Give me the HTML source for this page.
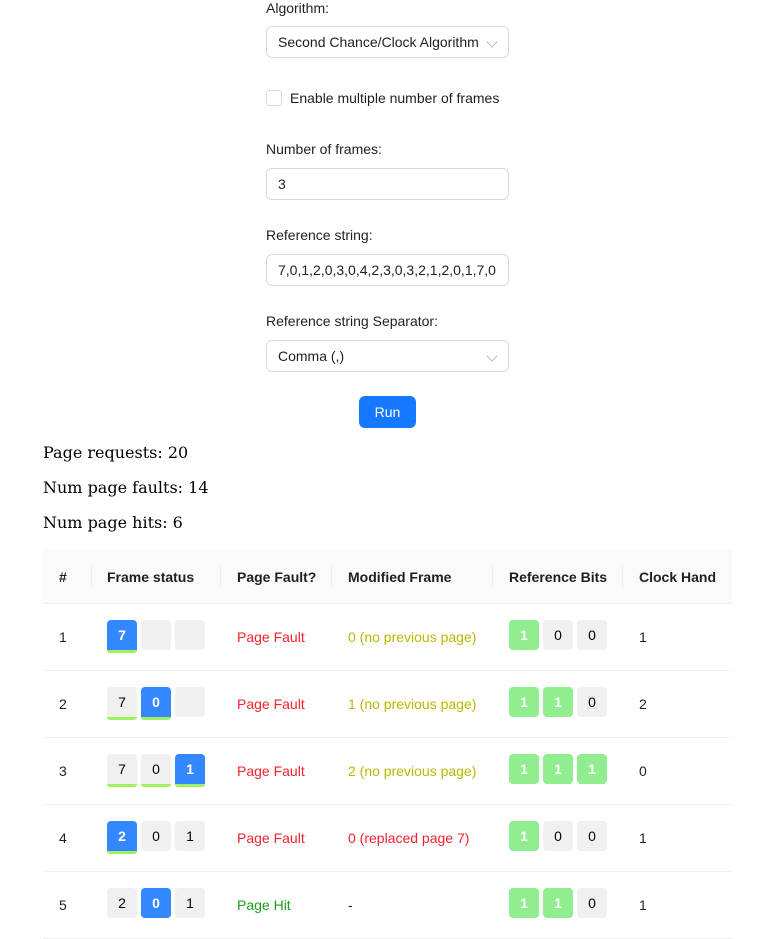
<!DOCTYPE html>
<html><head><style>
body{margin:0;width:784px;height:908px;overflow:hidden;background:#fff;font-family:"Liberation Sans",sans-serif;font-size:14px;color:rgba(0,0,0,.88);position:relative}
.a{position:absolute}
.lbl{left:266px}
.inp{left:266px;width:241px;height:30px;border:1px solid #d9d9d9;border-radius:6px;box-sizing:content-box;line-height:30px;padding:0;text-indent:11px}
.chev{position:absolute;right:12px;top:11px;width:7px;height:7px;border-right:1px solid #bbb;border-bottom:1px solid #bbb;transform:rotate(45deg)}
.serif{font-family:"DejaVu Serif",serif;font-size:16px;color:#000;left:43px}
.tbl{left:43px;width:689px;top:550px}
.hd{position:absolute;left:0;top:0;width:689px;height:53px;background:#fafafa;border-bottom:1px solid #f0f0f0}
.th{position:absolute;top:19px;font-weight:bold;color:rgba(0,0,0,.88)}
.sep{position:absolute;top:16px;width:1px;height:22px;background:#eee}
.row{position:absolute;left:0;width:689px;height:66px;border-bottom:1px solid #f0f0f0}
.c{position:absolute;top:25px}
.b{position:absolute;top:16px;width:30px;height:30px;border-radius:4px;background:#f0f0f0;text-align:center;line-height:30px;color:#000}
.bl{background:#3388ff;color:#fff;font-weight:bold}
.gb{border-bottom:3px solid #a0f060;border-radius:4px 4px 3px 3px}
.gr{background:#90ee90;color:#fff;font-weight:bold}
.red{color:#f5222d}.yl{color:#b8b800}.grn{color:#1a9e1a}
</style></head><body>
<div class="a lbl" style="top:0px">Algorithm:</div>
<div class="a inp" style="top:26px">Second Chance/Clock Algorithm<span class="chev"></span></div>
<div class="a" style="left:266px;top:90px;width:14px;height:14px;border:1px solid #d9d9d9;border-radius:4px"></div>
<div class="a" style="left:290px;top:90px">Enable multiple number of frames</div>
<div class="a lbl" style="top:141px">Number of frames:</div>
<div class="a inp" style="top:168px">3</div>
<div class="a lbl" style="top:227px">Reference string:</div>
<div class="a inp" style="top:254px">7,0,1,2,0,3,0,4,2,3,0,3,2,1,2,0,1,7,0</div>
<div class="a lbl" style="top:313px">Reference string Separator:</div>
<div class="a inp" style="top:340px">Comma (,)<span class="chev"></span></div>
<div class="a" style="left:359px;top:396px;width:57px;height:32px;background:#1677ff;border-radius:6px;color:#fff;text-align:center;line-height:32px">Run</div>
<div class="a serif" style="top:443px">Page requests: 20</div>
<div class="a serif" style="top:478px">Num page faults: 14</div>
<div class="a serif" style="top:513px">Num page hits: 6</div>
<div class="a tbl">
<div class="hd">
<div class="th" style="left:16px">#</div><div class="sep" style="left:48px"></div>
<div class="th" style="left:64px">Frame status</div><div class="sep" style="left:177px"></div>
<div class="th" style="left:194px">Page Fault?</div><div class="sep" style="left:288px"></div>
<div class="th" style="left:305px">Modified Frame</div><div class="sep" style="left:449px"></div>
<div class="th" style="left:466px">Reference Bits</div><div class="sep" style="left:579px"></div>
<div class="th" style="left:596px">Clock Hand</div>
</div>
<div class="row" style="top:54px">
<div class="c" style="left:16px">1</div>
<div class="b bl gb" style="left:64px">7</div><div class="b" style="left:98px"></div><div class="b" style="left:132px"></div>
<div class="c red" style="left:194px">Page Fault</div><div class="c yl" style="left:305px">0 (no previous page)</div>
<div class="b gr" style="left:466px">1</div><div class="b" style="left:500px">0</div><div class="b" style="left:534px">0</div>
<div class="c" style="left:596px">1</div></div>
<div class="row" style="top:121px">
<div class="c" style="left:16px">2</div>
<div class="b gb" style="left:64px">7</div><div class="b bl gb" style="left:98px">0</div><div class="b" style="left:132px"></div>
<div class="c red" style="left:194px">Page Fault</div><div class="c yl" style="left:305px">1 (no previous page)</div>
<div class="b gr" style="left:466px">1</div><div class="b gr" style="left:500px">1</div><div class="b" style="left:534px">0</div>
<div class="c" style="left:596px">2</div></div>
<div class="row" style="top:188px">
<div class="c" style="left:16px">3</div>
<div class="b gb" style="left:64px">7</div><div class="b gb" style="left:98px">0</div><div class="b bl gb" style="left:132px">1</div>
<div class="c red" style="left:194px">Page Fault</div><div class="c yl" style="left:305px">2 (no previous page)</div>
<div class="b gr" style="left:466px">1</div><div class="b gr" style="left:500px">1</div><div class="b gr" style="left:534px">1</div>
<div class="c" style="left:596px">0</div></div>
<div class="row" style="top:255px">
<div class="c" style="left:16px">4</div>
<div class="b bl gb" style="left:64px">2</div><div class="b" style="left:98px">0</div><div class="b" style="left:132px">1</div>
<div class="c red" style="left:194px">Page Fault</div><div class="c red" style="left:305px">0 (replaced page 7)</div>
<div class="b gr" style="left:466px">1</div><div class="b" style="left:500px">0</div><div class="b" style="left:534px">0</div>
<div class="c" style="left:596px">1</div></div>
<div class="row" style="top:322px">
<div class="c" style="left:16px">5</div>
<div class="b" style="left:64px">2</div><div class="b bl" style="left:98px">0</div><div class="b" style="left:132px">1</div>
<div class="c grn" style="left:194px">Page Hit</div><div class="c" style="left:305px">-</div>
<div class="b gr" style="left:466px">1</div><div class="b gr" style="left:500px">1</div><div class="b" style="left:534px">0</div>
<div class="c" style="left:596px">1</div></div>
</div>
</body></html>
